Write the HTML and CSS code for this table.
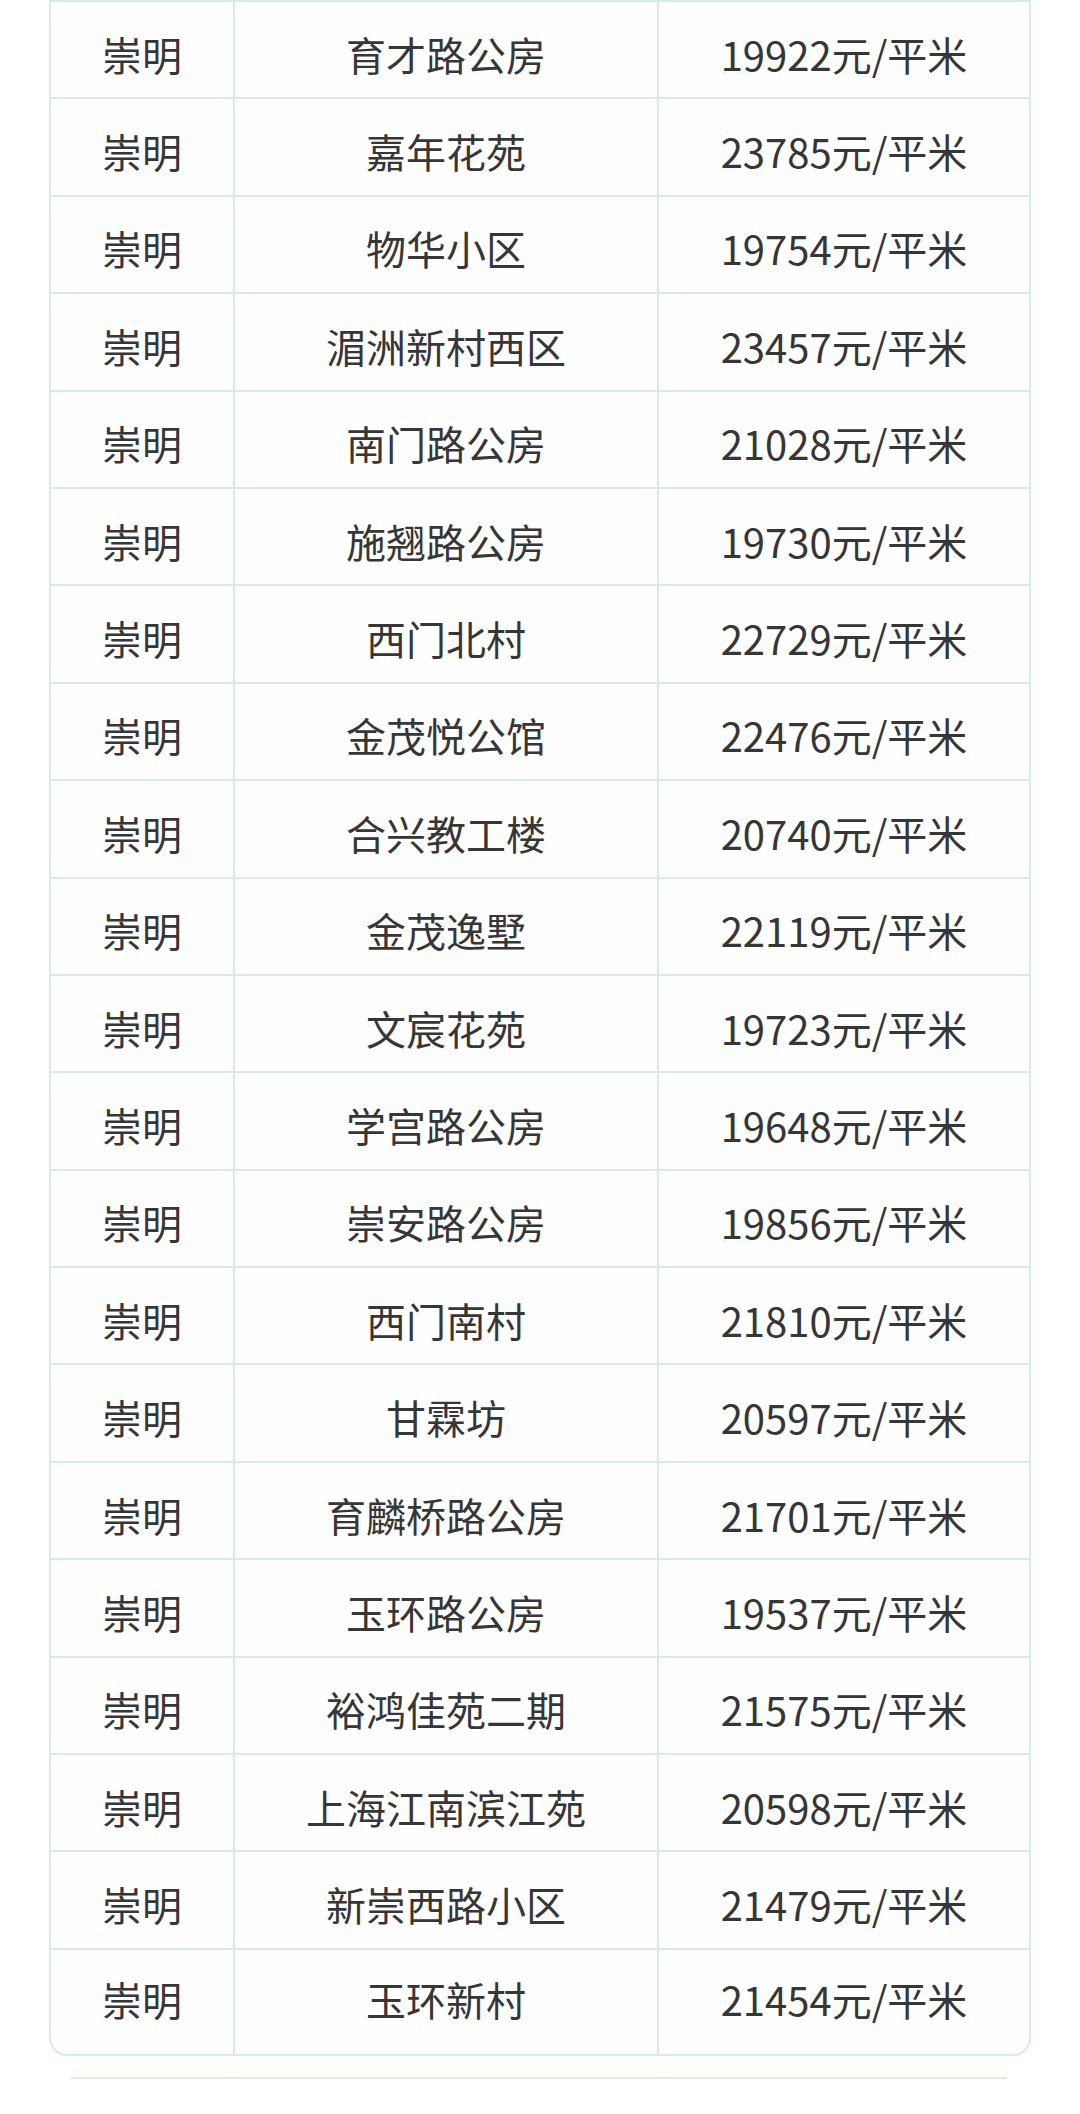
FILE: index.html
```html
<!DOCTYPE html>
<html lang="zh-CN">
<head>
<meta charset="utf-8">
<title>崇明小区房价</title>
<link rel="stylesheet" href="styles.css">
</head>
<body>
<div class="page">
  <div class="table">
    <div class="row"><div class="cell">崇明</div><div class="cell">育才路公房</div><div class="cell">19922元/平米</div></div>
    <div class="row"><div class="cell">崇明</div><div class="cell">嘉年花苑</div><div class="cell">23785元/平米</div></div>
    <div class="row"><div class="cell">崇明</div><div class="cell">物华小区</div><div class="cell">19754元/平米</div></div>
    <div class="row"><div class="cell">崇明</div><div class="cell">湄洲新村西区</div><div class="cell">23457元/平米</div></div>
    <div class="row"><div class="cell">崇明</div><div class="cell">南门路公房</div><div class="cell">21028元/平米</div></div>
    <div class="row"><div class="cell">崇明</div><div class="cell">施翘路公房</div><div class="cell">19730元/平米</div></div>
    <div class="row"><div class="cell">崇明</div><div class="cell">西门北村</div><div class="cell">22729元/平米</div></div>
    <div class="row"><div class="cell">崇明</div><div class="cell">金茂悦公馆</div><div class="cell">22476元/平米</div></div>
    <div class="row"><div class="cell">崇明</div><div class="cell">合兴教工楼</div><div class="cell">20740元/平米</div></div>
    <div class="row"><div class="cell">崇明</div><div class="cell">金茂逸墅</div><div class="cell">22119元/平米</div></div>
    <div class="row"><div class="cell">崇明</div><div class="cell">文宸花苑</div><div class="cell">19723元/平米</div></div>
    <div class="row"><div class="cell">崇明</div><div class="cell">学宫路公房</div><div class="cell">19648元/平米</div></div>
    <div class="row"><div class="cell">崇明</div><div class="cell">崇安路公房</div><div class="cell">19856元/平米</div></div>
    <div class="row"><div class="cell">崇明</div><div class="cell">西门南村</div><div class="cell">21810元/平米</div></div>
    <div class="row"><div class="cell">崇明</div><div class="cell">甘霖坊</div><div class="cell">20597元/平米</div></div>
    <div class="row"><div class="cell">崇明</div><div class="cell">育麟桥路公房</div><div class="cell">21701元/平米</div></div>
    <div class="row"><div class="cell">崇明</div><div class="cell">玉环路公房</div><div class="cell">19537元/平米</div></div>
    <div class="row"><div class="cell">崇明</div><div class="cell">裕鸿佳苑二期</div><div class="cell">21575元/平米</div></div>
    <div class="row"><div class="cell">崇明</div><div class="cell">上海江南滨江苑</div><div class="cell">20598元/平米</div></div>
    <div class="row"><div class="cell">崇明</div><div class="cell">新崇西路小区</div><div class="cell">21479元/平米</div></div>
    <div class="row row-last"><div class="cell">崇明</div><div class="cell">玉环新村</div><div class="cell">21454元/平米</div></div>
  </div>
  <div class="card-back"></div>
</div>
</body>
</html>
```

FILE: styles.css
```css
html, body {
  margin: 0;
  padding: 0;
  background: #ffffff;
}

.page {
  width: 1080px;
  font-family: "Noto Sans CJK SC", "Noto Sans", sans-serif;
  color: #363636;
}

.table {
  margin-left: 49px;
  width: 982px;
  box-sizing: border-box;
  border: 2px solid #d6eaf0;
  border-radius: 0 0 18px 18px;
  background: #fefefe;
  overflow: hidden;
}

.row {
  display: grid;
  grid-template-columns: 182px 424px 1fr;
  height: 97.4px;
  box-sizing: border-box;
  border-bottom: 2px solid #d6eaf0;
}

.row-last {
  border-bottom: none;
  height: 104px;
}

.cell {
  display: flex;
  align-items: center;
  justify-content: center;
  padding-top: 8px;
  box-sizing: border-box;
  font-size: 40px;
  font-weight: 400;
  line-height: 1;
  white-space: nowrap;
  border-left: 2px solid #d6eaf0;
}

.row-last .cell {
  padding-bottom: 6px;
  padding-top: 0;
}

.cell:first-child {
  border-left: none;
}

.card-back {
  margin-left: 71px;
  width: 936px;
  height: 21px;
  background: #fffefa;
  border-bottom: 2px solid #dbeaee;
}
```
